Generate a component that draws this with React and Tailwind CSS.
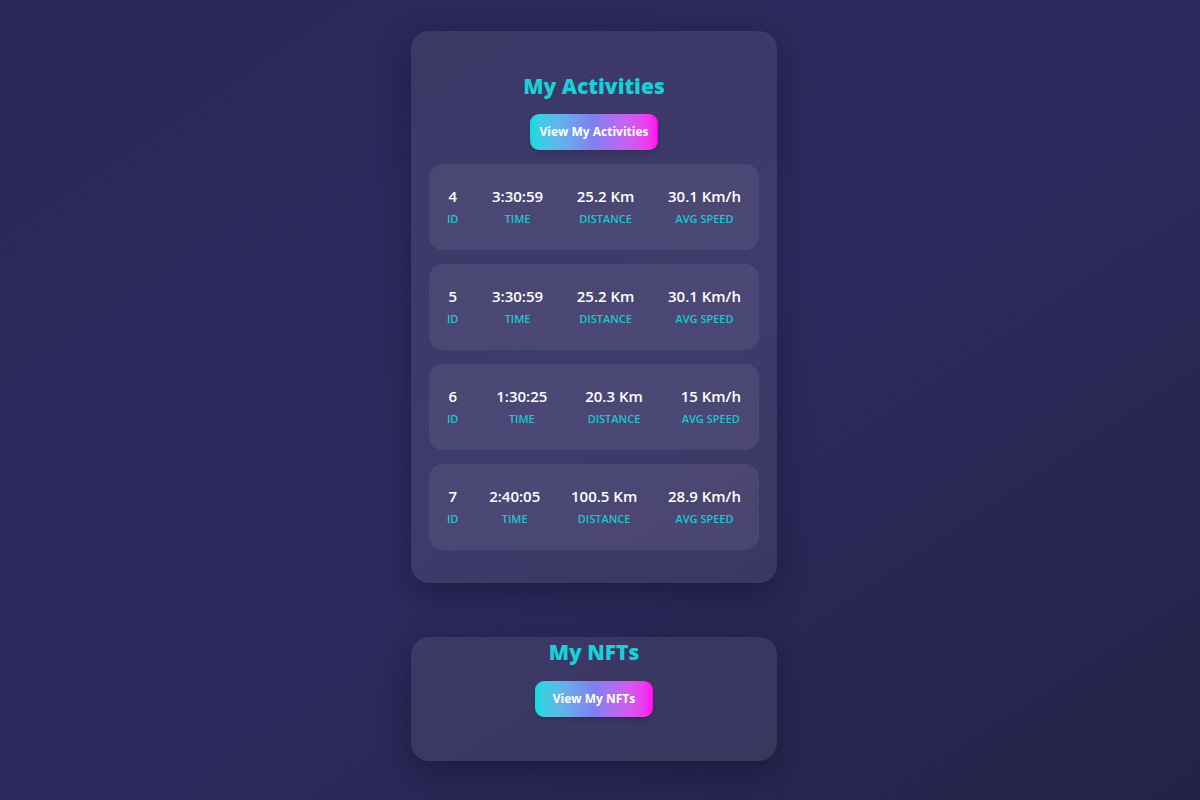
import React from 'react'

const activities = [
  { id: 4, time: '3:30:59', distance: '25.2 Km', speed: '30.1 Km/h' },
  { id: 5, time: '3:30:59', distance: '25.2 Km', speed: '30.1 Km/h' },
  { id: 6, time: '1:30:25', distance: '20.3 Km', speed: '15 Km/h' },
  { id: 7, time: '2:40:05', distance: '100.5 Km', speed: '28.9 Km/h' },
]

const Stat = ({ value, label }) => (
  <div className="flex flex-col items-center">
    <span className="text-[15px] font-semibold leading-[22px] text-white">{value}</span>
    <span className="mt-[4px] text-[11px] font-semibold leading-[16px] uppercase text-[#1fc4d0]">{label}</span>
  </div>
)

const GradientButton = ({ children, width }) => (
  <button className={`${width} h-[36px] rounded-[9px] bg-gradient-to-r from-[#00dbe0] via-[#7f7ff0] to-[#ff00ee] text-[12px] font-bold text-white shadow-md`}>
    {children}
  </button>
)

const App = () => {
  return (
    <div
      className="min-h-[800px] w-full bg-gradient-to-br from-[#2a2757] via-[#2e2a5f] to-[#242246] flex flex-col items-center pt-[31px] pr-[12px]"
      style={{ fontFamily: '"Open Sans", "Noto Sans", sans-serif' }}
    >
      <section className="w-[366px] rounded-[18px] bg-white/[0.08] shadow-[0_10px_30px_rgba(15,12,40,0.45)] px-[18px] pt-[40px] pb-[33px] flex flex-col items-center">
        <h2 className="text-[21px] font-extrabold leading-[30px] text-[#19cfd9]">My Activities</h2>
        <div className="mt-[13px]">
          <GradientButton width="w-[128px]">View My Activities</GradientButton>
        </div>
        <div className="mt-[14px] w-full flex flex-col gap-[14px]">
          {activities.map((a) => (
            <div key={a.id} className="h-[86px] rounded-[14px] bg-white/[0.07] px-[18px] pb-[3px] flex items-center justify-between">
              <Stat value={a.id} label="ID" />
              <Stat value={a.time} label="Time" />
              <Stat value={a.distance} label="Distance" />
              <Stat value={a.speed} label="Avg Speed" />
            </div>
          ))}
        </div>
      </section>

      <section className="mt-[54px] w-[366px] h-[124px] rounded-[18px] bg-white/[0.08] shadow-[0_10px_30px_rgba(15,12,40,0.45)] flex flex-col items-center">
        <h2 className="text-[21px] font-extrabold leading-[30px] text-[#19cfd9]">My NFTs</h2>
        <div className="mt-[14px]">
          <GradientButton width="w-[118px]">View My NFTs</GradientButton>
        </div>
      </section>
    </div>
  )
}

export default App
